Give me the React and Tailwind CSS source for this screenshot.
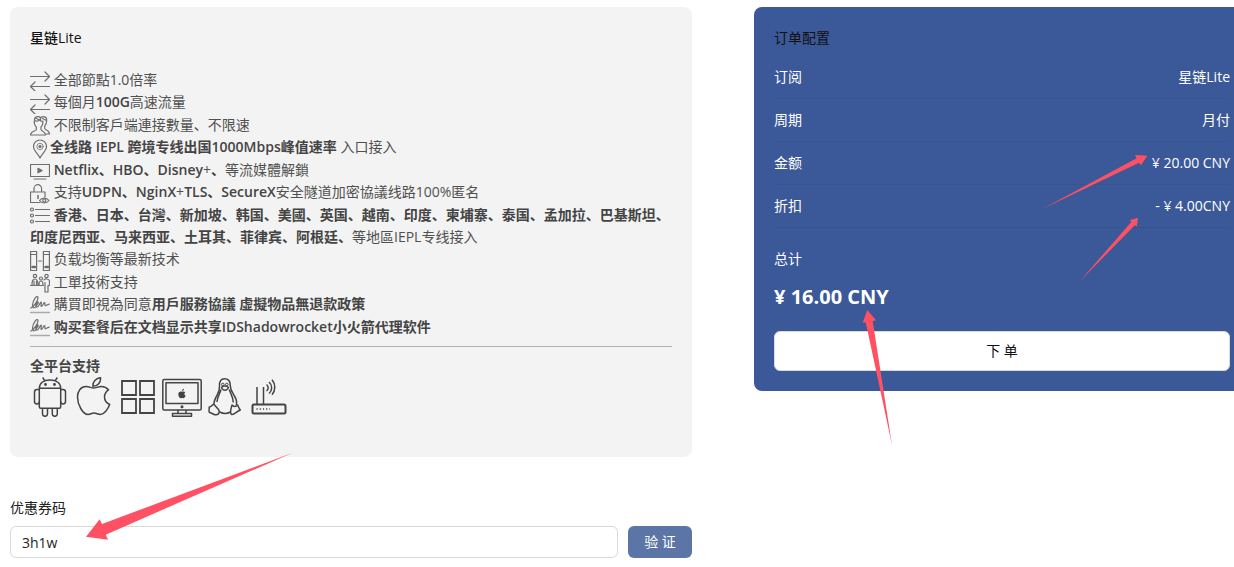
import React, { useState } from "react";

const LineIcon = ({ children }) => (
  <svg
    viewBox="0 0 20 20"
    className="inline-block h-5 w-5 align-middle text-[#6e6e6e]"
    fill="none"
    stroke="currentColor"
    strokeWidth="1.2"
    strokeLinecap="round"
    strokeLinejoin="round"
    aria-hidden="true"
  >
    {children}
  </svg>
);

const PlatformIcon = ({ label, children }) => (
  <svg
    viewBox="0 0 40 40"
    className="h-10 w-10 text-[#444]"
    fill="none"
    stroke="currentColor"
    strokeWidth="1.5"
    strokeLinejoin="round"
    role="img"
    aria-label={label}
  >
    {children}
  </svg>
);

const TransferIcon = () => (
  <LineIcon>
    <path d="M0.5 5.5h19M15 1l4.5 4.5l-4.500 4.500M19.500 15.500h-19M5 11l-4.500 4.500l4.500 4.500" />
  </LineIcon>
);

const UsersIcon = () => (
  <LineIcon>
    <path d="M4.500 4c0-2.200 1.500-3.300 3.500-3.300c1 0 1.700.3 2.500 1c.8-.7 1.500-1 2.700-1c2.200 0 3.500 1.300 3.500 3.500c0 2.600-.7 4.600-2 6v2.300c0 1.800 4.800 1.500 4.800 5.500h-3.500" />
    <path d="M4.500 4.500c-.6 2.600.2 5 1.800 6.500v2.500c0 1.800-5.800 1.500-5.800 5.500h15c0-3.500-4.500-3.700-4.500-5.500v-2.500c1.500-1.500 2.200-3.500 1.800-6c-1.300.8-2.300-.3-3-1.200c-1.500 1.500-3.500 1.500-5.300.7z" />
    <path d="M6 2.500l3.500 1.200M10.500 1.700v3M12.500 2.500l3.500 1.800" />
  </LineIcon>
);

const PinIcon = () => (
  <LineIcon>
    <path d="M10 19c-1.500-3.800-6.500-7-6.500-11.500a6.500 6.500 0 0 1 13 0c0 4.500-5 7.700-6.500 11.500z" />
    <circle cx="10" cy="7.500" r="3.200" strokeWidth=".8" />
    <circle cx="10" cy="7.500" r="1" fill="currentColor" />
  </LineIcon>
);

const VideoIcon = () => (
  <LineIcon>
    <path d="M0.500 3.500h19v12h-19zM4 18h12" />
    <path d="M8 7.300v4.500l4-2.200z" fill="currentColor" />
  </LineIcon>
);

const LockIcon = () => (
  <LineIcon>
    <path d="M10 18.500h-9.500v-10.500h14.500v5M4 8v-3.500a3.800 3.800 0 0 1 7.600 0v3.500" />
    <path d="M8 11.500v3" strokeWidth="1.500" />
    <path d="M9.500 16.500c2.500-3.300 7-3.300 9.500 0c-2.500 3.200-7 3.200-9.500 0z" />
    <circle cx="14.300" cy="16.500" r="1.500" />
  </LineIcon>
);

const ListIcon = () => (
  <LineIcon>
    <circle cx="2" cy="3.500" r="1.500" />
    <circle cx="2" cy="9.500" r="1.500" />
    <circle cx="2" cy="15.500" r="1.500" />
    <path d="M5.500 3.500h14M5.500 9.500h14M5.500 15.500h14" />
  </LineIcon>
);

const ServerIcon = () => (
  <LineIcon>
    <path d="M.6.500h6v19h-6zM13.400.500h6v19h-6zM8.500 10h3M1 3.500h5M14 3.500h5" />
    <path d="M2.500 16h2.500M15.500 16h2.500" strokeWidth="2.500" />
  </LineIcon>
);

const SupportIcon = () => (
  <LineIcon>
    <circle cx="5" cy="3" r="1.700" />
    <circle cx="11" cy="5.500" r="1.500" />
    <circle cx="16.500" cy="3" r="1.700" />
    <path d="M0.500 12.500h13M2 12c0-4 .5-6 3-6s3 2.500 3 6M9 12c0-3 .5-4 2-4s2 1 2 4M4 8v4M6.500 8v4" />
    <path d="M14 7c1-1.500 5-1.500 5.500 1v4.500h-1.500v6.500h-3v-9.500" />
  </LineIcon>
);

const SignIcon = () => (
  <LineIcon>
    <path d="M.8 13c3-1.500 7.500-7.500 7.200-10.500c-.1-1.500-1.800-1-2.600.2c-1.800 2.600-3.400 6.800-2.600 9.200c.6 1.700 2.200.8 3.200-.6c1-1.500 3-3.800 2-4.300c-1.500-.5-3 4.500-1.300 5.200c1.800.6 3.300-5.200 4.400-5.200c.8 0-.8 4.500.3 4.500c1.200 0 1.900-4 3.100-4c.8 0 0 3 .7 3.200c.8 0 1.700-1 4-1.500" />
    <path d="M0.500 17.500h19" stroke="#aaa" strokeWidth="1.500" />
  </LineIcon>
);

const B = ({ children }) => (
  <strong className="font-semibold text-[#444]">{children}</strong>
);

const Features = () => (
  <ul className="mt-5 flex min-h-[269px] flex-col justify-between leading-[22px] text-[#505050]">
    <li>
      <TransferIcon /> 全部節點1.0倍率
    </li>
    <li>
      <TransferIcon /> 每個月<B>100G</B>高速流量
    </li>
    <li>
      <UsersIcon /> 不限制客戶端連接數量、不限速
    </li>
    <li>
      <PinIcon />
      <B>全线路 IEPL 跨境专线出国1000Mbps峰值速率</B> 入口接入
    </li>
    <li>
      <VideoIcon /> <B>Netflix、HBO、Disney</B>+<B>、</B>等流媒體解鎖
    </li>
    <li>
      <LockIcon /> 支持<B>UDPN、NginX</B>+<B>TLS、SecureX</B>
      安全隧道加密協議线路100%匿名
    </li>
    <li>
      <ListIcon />{" "}
      <B>
        香港、日本、台灣、新加坡、韩国、美國、英国、越南、印度、柬埔寨、泰国、孟加拉、巴基斯坦、
      </B>
      <B>印度尼西亚、马来西亚、土耳其、菲律宾、阿根廷、</B>
      等地區IEPL专线接入
    </li>
    <li>
      <ServerIcon /> 负载均衡等最新技术
    </li>
    <li>
      <SupportIcon /> 工單技術支持
    </li>
    <li>
      <SignIcon /> 購買即視為同意<B>用戶服務協議 虛擬物品無退款政策</B>
    </li>
    <li>
      <SignIcon /> <B>购买套餐后在文档显示共享IDShadowrocket小火箭代理软件</B>
    </li>
  </ul>
);

const Platforms = () => (
  <div className="flex gap-1">
    <PlatformIcon label="Android">
      <path d="M9.300 11.300h21.400v18.500a1.500 1.500 0 0 1-1.500 1.500h-18.400a1.500 1.500 0 0 1-1.500-1.500zM9.300 11.300c0-5 4-8.300 10.700-8.300s10.700 3.300 10.700 8.300M12.700.5l2.500 3.800M27.300.5l-2.500 3.800" />
      <path d="M9.300 12.500h-2.300a2.500 2.500 0 0 0-2.500 2.500v9.500a2.400 2.400 0 0 0 4.800 0M30.700 12.500h2.300a2.500 2.500 0 0 1 2.500 2.500v9.500a2.400 2.400 0 0 1-4.800 0M12.500 31.300v5.500a2.500 2.500 0 0 0 5 0v-5.500M22.300 31.300v5.500a2.500 2.500 0 0 0 5 0v-5.500" />
      <circle cx="15.500" cy="7.500" r=".7" fill="currentColor" />
      <circle cx="24.500" cy="7.500" r=".7" fill="currentColor" />
    </PlatformIcon>
    <PlatformIcon label="Apple">
      <path d="M19.500 11C17 11 15.500 9.500 12 9.500C7 9.500 3.500 14 3.500 20C3.500 28 9 37.500 14 37.500C16.500 37.500 17.500 36 20 36C22.500 36 24 37.500 26.500 37.500C30 37.500 34 32 35.700 27.500C32.500 26 30.500 23.500 30.500 20C30.500 16.800 32 14.500 34.500 12.800C32.500 10.500 30 9.500 27.500 9.500C24 9.500 22 11 19.500 11z" />
      <path d="M19 9.300c-.5-4.600 3-8.300 7.500-8.600c.5 4.600-2.800 8.400-7.500 8.600z" />
    </PlatformIcon>
    <PlatformIcon label="Windows">
      <path
        d="M4 4h14v14h-14zM22 4h14v14h-14zM4 22h14v14h-14zM22 22h14v14h-14z"
        strokeWidth="1.800"
        strokeLinejoin="miter"
      />
    </PlatformIcon>
    <PlatformIcon label="macOS">
      <rect x=".8" y="2.500" width="38.400" height="30.500" rx="1.500" />
      <rect x="4" y="5.800" width="32" height="20.700" />
      <path d="M16 33v3.500M24 33v3.500M10.500 36.500h19v2.700h-19z" />
      <circle cx="20" cy="29.700" r=".8" fill="currentColor" />
      <path
        d="M20 14.800c1-.5 2.500-.7 3.300.5c-1.300 1-1.200 2.700.3 3.500c-.6 1.500-1.500 2.700-2.300 2.500c-.8-.3-1.500-.3-2.300 0c-1.200.3-2.700-2-2.700-4c0-2.300 2-3.300 3.700-2.500zM20 14c0-1.300.8-2.200 2-2.300c0 1.300-.8 2.200-2 2.300z"
        fill="currentColor"
        stroke="none"
      />
    </PlatformIcon>
    <PlatformIcon label="Linux">
      <path d="M13.500 9c-.4-4.500 1.500-7.300 5-7.300s5.700 2.300 5.700 6.300c0 5 1.500 6.500 4 10.500c1.800 3 3.300 6 2 9.500M13.500 9c.3 3.500-.2 5.500-2.300 9c-1.800 3-3.300 6.500-3.300 9.500" />
      <path d="M15 12.500c-1 4-4 8-4 12.500M23.300 12.500c1.300 4.500 4 7.500 4 13M14 35c3 1.800 7 1.800 10.500 0" />
      <path d="M7.800 27.200l4.500 5c2.300 3.500 0 6-3.500 5.500l-5.500-2.500c-.8-2.200.2-2.500-.1-5.200c2.300.3 2.800-2.500 4.600-2.800zM26 28c-1 4-2.500 7.500-.7 9.300c2.500 1.200 4.500-2.300 9-4.300c-1.300-1.800-2.200-2.700-2.500-5c-2.300 2-4.300 1.800-5.800 0z" />
      <path d="M15.500 10.500c1.500-2 5-2 7 0c-1.500 3.500-5.500 3.500-7 0z" />
      <circle cx="16.800" cy="7.500" r="1.300" strokeWidth="1" />
      <circle cx="20.800" cy="7.500" r="1.300" strokeWidth="1" />
    </PlatformIcon>
    <PlatformIcon label="Router">
      <rect x="2.500" y="27.500" width="33" height="9" rx="1.500" strokeWidth="2" />
      <path d="M7 10v17M13.500 10v17" />
      <path d="M6.500 32h13.500" strokeDasharray="1.200 2" />
      <path d="M16.500 7.500a4 4 0 0 1 0 6.500M19 5a7.500 7.500 0 0 1 0 11.500M22 2.800a11.500 11.500 0 0 1 0 15" />
    </PlatformIcon>
  </div>
);

const orderRows = [
  { label: "订阅", value: "星链Lite" },
  { label: "周期", value: "月付" },
  { label: "金额", value: "¥ 20.00 CNY" },
  { label: "折扣", value: "- ¥ 4.00CNY" },
];

const OrderPanel = () => (
  <aside className="relative self-start rounded-l-lg bg-[#3b5998] py-5 pr-1 pl-5 text-white">
    <h2 className="text-[#111]">订单配置</h2>
    <dl className="mt-[7px]">
      {orderRows.map((row) => (
        <div
          key={row.label}
          className="flex justify-between border-b border-[#385591] py-2.5"
        >
          <dt>{row.label}</dt>
          <dd>{row.value}</dd>
        </div>
      ))}
    </dl>
    <p className="mt-5">总计</p>
    <p className="mt-[13px] text-xl leading-7 font-bold">¥ 16.00 CNY</p>
    <button
      type="button"
      className="mt-5 block h-10 w-full rounded-md border border-[#d9d9d9] bg-white text-[#111]"
    >
      下 单
    </button>
    <svg
      viewBox="0 0 480 450"
      className="pointer-events-none absolute top-0 left-0 h-[450px] w-[480px] fill-[#ff5163]"
      aria-hidden="true"
    >
      <path d="M288.700 201.700L382.700 151.300L381 148L393.300 148.700L387 158.300L385 155.700z" />
      <path d="M325.300 274.700L377.300 215L376 213L384 211L382.700 219.700L381 218z" />
      <path d="M138 438L111.700 315.300L108.700 315.700L113.300 303L122 313.300L118.700 314z" />
    </svg>
  </aside>
);

const App = () => {
  const [coupon, setCoupon] = useState("3h1w");

  return (
    <main className="grid grid-cols-[682fr_480fr] gap-[62px] overflow-hidden bg-white pt-[7px] pb-2 pl-2.5 font-['Open_Sans','Noto_Sans_CJK_SC',sans-serif] text-sm leading-[22px] text-[#222]">
      <div className="relative">
        <section className="rounded-lg bg-[#f3f3f3] px-5 pt-5 pb-10">
          <h1 className="font-medium text-[#111]">星链Lite</h1>
          <Features />
          <hr className="mt-2 border-[#b0b0b0]" />
          <h2 className="mt-2 font-bold text-[#444]">全平台支持</h2>
          <Platforms />
        </section>

        <form className="mt-10" onSubmit={(e) => e.preventDefault()}>
          <label htmlFor="coupon">优惠券码</label>
          <div className="mt-[7px] flex gap-2.5">
            <input
              id="coupon"
              type="text"
              value={coupon}
              onChange={(e) => setCoupon(e.target.value)}
              className="h-8 min-w-0 flex-1 rounded-md border border-[#d9d9d9] bg-white px-[11px] outline-none"
            />
            <button
              type="submit"
              className="h-8 w-16 rounded-md bg-[#5b75a6] text-white"
            >
              验 证
            </button>
          </div>
        </form>

        <svg
          viewBox="0 0 682 551"
          className="pointer-events-none absolute top-0 left-0 h-[551px] w-[682px] fill-[#ff5163]"
          aria-hidden="true"
        >
          <path d="M282.700 445.700L92 517L89.700 512.300L76 529.700L98 532.700L95.700 527.700z" />
        </svg>
      </div>

      <OrderPanel />
    </main>
  );
};

export default App;
